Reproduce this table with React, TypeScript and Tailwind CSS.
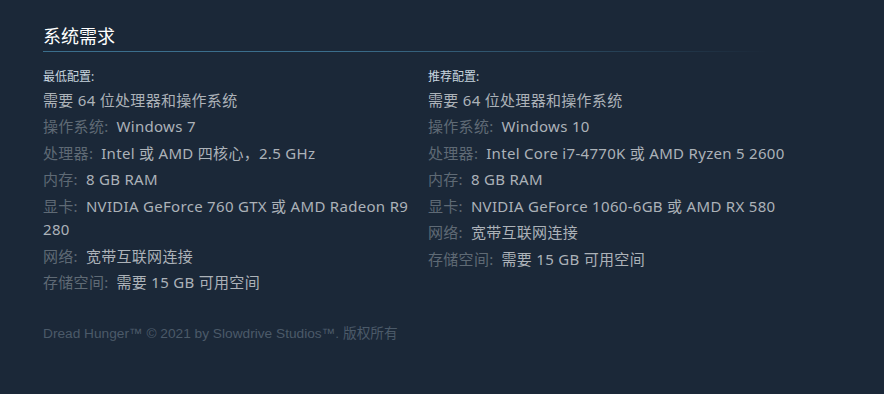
const minimum: Array<[string, string]> = [
  ['', '需要 64 位处理器和操作系统'],
  ['操作系统:', 'Windows 7'],
  ['处理器:', 'Intel 或 AMD 四核心，2.5 GHz'],
  ['内存:', '8 GB RAM'],
  ['显卡:', 'NVIDIA GeForce 760 GTX 或 AMD Radeon R9 280'],
  ['网络:', '宽带互联网连接'],
  ['存储空间:', '需要 15 GB 可用空间'],
];

const recommended: Array<[string, string]> = [
  ['', '需要 64 位处理器和操作系统'],
  ['操作系统:', 'Windows 10'],
  ['处理器:', 'Intel Core i7-4770K 或 AMD Ryzen 5 2600'],
  ['内存:', '8 GB RAM'],
  ['显卡:', 'NVIDIA GeForce 1060-6GB 或 AMD RX 580'],
  ['网络:', '宽带互联网连接'],
  ['存储空间:', '需要 15 GB 可用空间'],
];

function ReqColumn({ title, rows, className }: { title: string; rows: Array<[string, string]>; className?: string }) {
  return (
    <div className={className}>
      <div className="text-[12px] leading-[18px] mb-[2.5px] text-[#c6d4df]">{title}</div>
      <ul>
        {rows.map(([label, value], i) => (
          <li key={i} className="text-[15px] leading-[23.5px] mb-[3px] tracking-[0.3px] text-[#acb2b8]">
            {label && <span className="text-[#5f6a75] mr-[8px]">{label}</span>}
            {value}
          </li>
        ))}
      </ul>
    </div>
  );
}

export default function App() {
  return (
    <div
      className="w-full h-[394px] bg-[#1b2838] pl-[43px] pt-[24px]"
      style={{ fontFamily: '"Noto Sans", "Noto Sans CJK SC", sans-serif' }}
    >
      <h2 className="text-[18px] leading-[24px] pb-[3px] text-white font-normal">系统需求</h2>
      <div className="h-px w-[725px] bg-[linear-gradient(to_right,#3b6e8c_0%,#3b6e8c_40%,transparent_100%)]" />

      {/* Requirements */}
      <div className="grid grid-cols-[385px_385px] mt-[16px]">
        <ReqColumn title="最低配置:" rows={minimum} className="pr-[10px]" />
        <ReqColumn title="推荐配置:" rows={recommended} />
      </div>

      <div
        className="mt-[27px] text-[13.7px] leading-[18px] text-[#4b5a69]"
        style={{ fontFamily: '"Liberation Sans", "Noto Sans CJK SC", sans-serif' }}
      >
        Dread Hunger™ © 2021 by Slowdrive Studios™. 版权所有
      </div>
    </div>
  );
}
